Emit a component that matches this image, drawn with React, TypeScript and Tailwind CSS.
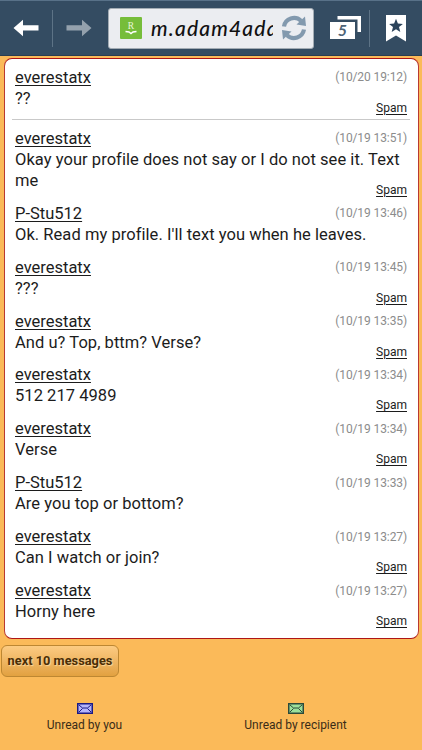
interface Message {
  from: string;
  time: string;
  body: string;
  spam?: boolean;
}

const messages: Message[] = [
  { from: 'everestatx', time: '10/20 19:12', body: '??', spam: true },
  {
    from: 'everestatx',
    time: '10/19 13:51',
    body: 'Okay your profile does not say or I do not see it. Text me',
    spam: true,
  },
  { from: 'P-Stu512', time: '10/19 13:46', body: "Ok. Read my profile. I'll text you when he leaves." },
  { from: 'everestatx', time: '10/19 13:45', body: '???', spam: true },
  { from: 'everestatx', time: '10/19 13:35', body: 'And u? Top, bttm? Verse?', spam: true },
  { from: 'everestatx', time: '10/19 13:34', body: '512 217 4989', spam: true },
  { from: 'everestatx', time: '10/19 13:34', body: 'Verse', spam: true },
  { from: 'P-Stu512', time: '10/19 13:33', body: 'Are you top or bottom?' },
  { from: 'everestatx', time: '10/19 13:27', body: 'Can I watch or join?', spam: true },
  { from: 'everestatx', time: '10/19 13:27', body: 'Horny here', spam: true },
];

function ArrowIcon({ className }: { className: string }) {
  return (
    <svg viewBox="0 0 26 18" className={`h-[18px] w-[26px] ${className}`} fill="currentColor">
      <path d="M.5 9 10 .8V6.300H25.500V11.500H10V17.200Z" />
    </svg>
  );
}

function ReloadIcon() {
  return (
    <svg viewBox="0 0 26 26" className="h-[26px] w-[26px] text-[#8299ae]">
      <path
        d="M3 11.500A10.200 10.200 0 0 1 20 5.800M23 14.500A10.200 10.200 0 0 1 6 20.200"
        fill="none"
        stroke="currentColor"
        strokeWidth="4.200"
      />
      <path d="M24 1.500 25 11 15.500 9.500ZM2 24.500 1 15 10.500 16.500Z" fill="currentColor" />
    </svg>
  );
}

function Divider() {
  return <div className="h-[37px] w-px bg-[#5d7386]" />;
}

function BrowserBar() {
  return (
    <header className="flex h-14 items-center border-t border-b border-t-[#587188] border-b-[#2b3d50] bg-[#344c62]">
      <button className="ml-[13px]">
        <ArrowIcon className="text-white" />
      </button>
      <div className="ml-[13px]">
        <Divider />
      </div>
      <button className="ml-[13px]">
        <ArrowIcon className="-scale-x-100 text-[#94a1ad]" />
      </button>
      <div className="ml-[16px] flex h-[41px] w-[206px] items-center rounded-[3px] border border-[#a3acb4] bg-[#ebedf1]">
        <svg viewBox="0 0 22 22" className="ml-[11px] h-[22px] w-[22px] shrink-0">
          <rect width="22" height="22" rx="1" fill="#76bd3a" />
          <text x="11" y="11.500" textAnchor="middle" fontSize="9.500" fontFamily="Liberation Serif, serif" fill="#e9f6dc">
            R
          </text>
          <path d="M5.500 14.500 9 15 11 16.500 13 15 16.500 14.500" fill="none" stroke="#fff" strokeWidth="1.500" />
        </svg>
        <div className="ml-[9px] w-[122px] shrink-0 overflow-hidden font-['Lato','Open_Sans',sans-serif] text-[21px] leading-[30px] font-medium tracking-[1.200px] whitespace-nowrap text-[#111] italic">
          m.adam4adam.com
        </div>
        <button className="ml-[8px] shrink-0">
          <ReloadIcon />
        </button>
      </div>
      <svg viewBox="0 0 32 24" className="ml-4 h-6 w-8 shrink-0">
        <path d="M7.500 0H31V16H27.500V3.500H7.500Z" fill="#fff" />
        <rect x="0" y="6" width="25" height="17" fill="#fff" />
        <text
          x="12.500"
          y="20"
          textAnchor="middle"
          fontSize="16"
          fontStyle="italic"
          fontWeight="700"
          fontFamily="Lato, sans-serif"
          fill="#4d6376"
        >
          5
        </text>
      </svg>
      <div className="ml-[7px]">
        <Divider />
      </div>
      <svg viewBox="0 0 20 27" className="ml-[16px] h-[27px] w-5 shrink-0">
        <path d="M0 0H20V26.500L10 20.500 0 26.500Z" fill="#fff" />
        <path d="M10 3.800 11.900 8.600 16.900 8.900 13 12 14.300 17 10 14.200 5.700 17 7 12 3.100 8.900 8.100 8.600Z" fill="#2b435a" />
      </svg>
    </header>
  );
}

function MessageRow({ message }: { message: Message }) {
  return (
    <div className="px-[3px]">
      <div className="flex h-[21px] items-center justify-between">
        <a href="#" className="text-[16.500px] leading-[21px] underline underline-offset-2">
          {message.from}
        </a>
        <span className="text-xs tracking-[-0.100px] text-[#8c8c8c]">({message.time})</span>
      </div>
      <p className="text-[16.500px] leading-[21px] tracking-[0.050px]">{message.body}</p>
      {message.spam ? (
        <div className="-mt-[9px] flex h-[20.900px] justify-end">
          <a href="#" className="text-xs leading-4 underline underline-offset-2">
            Spam
          </a>
        </div>
      ) : (
        <div className="h-[11.900px]" />
      )}
    </div>
  );
}

function Envelope({ dark, light }: { dark: string; light: string }) {
  return (
    <svg viewBox="0 0 16 11" className="h-[11px] w-4">
      <rect x=".75" y=".75" width="14.500" height="9.500" fill={light} stroke={dark} strokeWidth="1.500" />
      <path d="M2 2 5.500 5H10.500L14 2M2 9 5.500 5.500M14 9 10.500 5.500" fill="none" stroke={dark} strokeWidth="1" />
    </svg>
  );
}

export default function App() {
  const [latest, ...older] = messages;

  return (
    <div className="h-[750px] w-[422px] overflow-hidden bg-[#fbba59] font-['Roboto',sans-serif] text-[#1c1c1c]">
      <BrowserBar />
      <main className="mt-[2px] mr-[3px] ml-[4px] h-[581px] rounded-lg border border-x-[#b93a32] border-y-[#ae1616] bg-white pt-[7.500px] pr-2 pl-[7px]">
        <div className="mb-[7.900px] h-[53.500px] border-b border-[#c9c9c9]">
          <MessageRow message={latest} />
        </div>
        {older.map((message, i) => (
          <MessageRow key={i} message={message} />
        ))}
      </main>
      <button className="mt-[6px] ml-px flex h-8 w-[118px] items-center justify-center rounded-md border border-[#bd8732] bg-gradient-to-b from-[#fccb82] to-[#e2a140] text-[12.800px] font-bold whitespace-nowrap text-[#4a2e06] [text-shadow:1px_1px_1px_#fbd79b]">
        next 10 messages
      </button>
      <footer className="mt-[26px] grid grid-cols-2 text-xs text-[#3a2c17]">
        <div className="flex flex-col items-center gap-[3px] pr-[42px]">
          <Envelope dark="#1b1b85" light="#b4b4fb" />
          <span>Unread by you</span>
        </div>
        <div className="flex flex-col items-center gap-[3px] pr-[42px]">
          <Envelope dark="#2c4a3a" light="#9be09b" />
          <span>Unread by recipient</span>
        </div>
      </footer>
    </div>
  );
}
